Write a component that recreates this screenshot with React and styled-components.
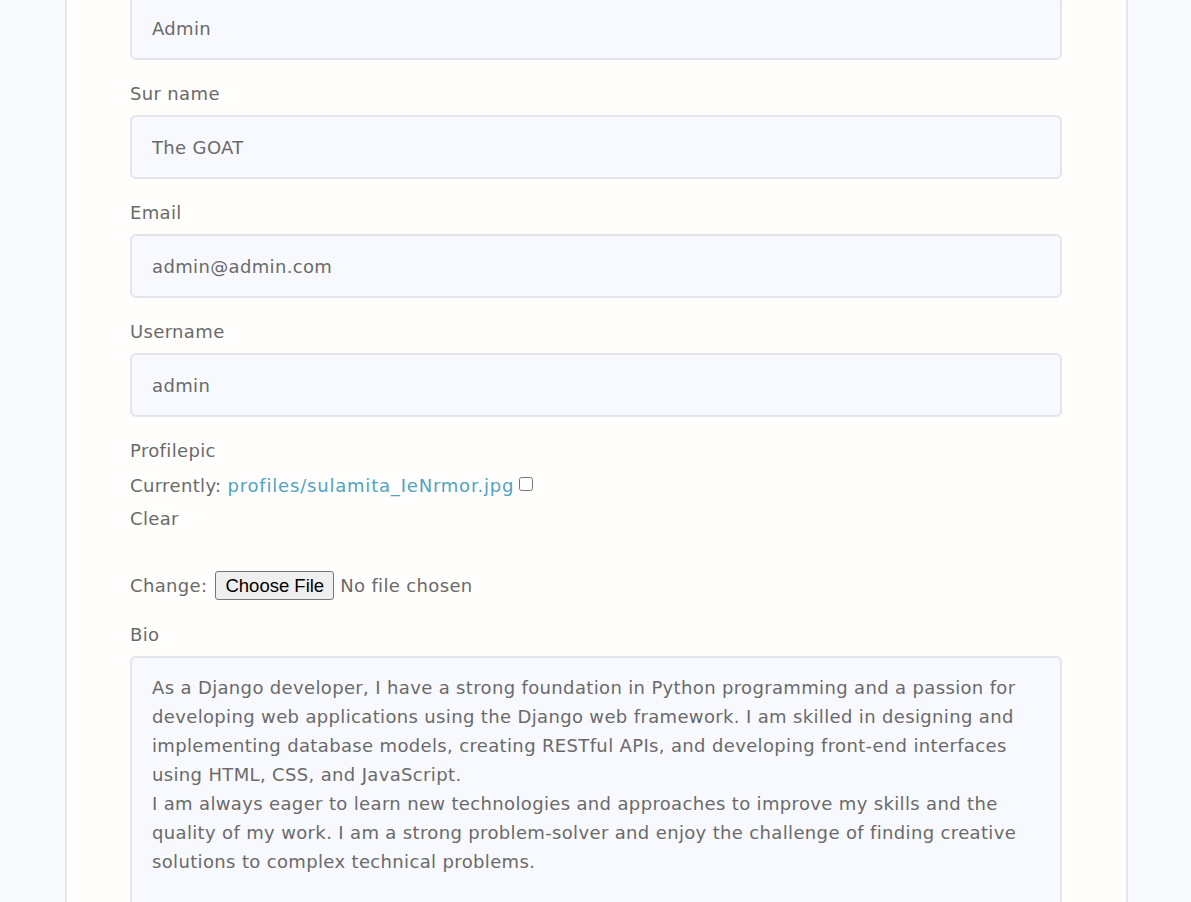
import React from "react";
import styled, { createGlobalStyle } from "styled-components";

const GlobalStyle = createGlobalStyle`
  html, body { margin: 0; padding: 0; background: #f8f9fd; overflow: hidden; }
  body { font-family: "DejaVu Sans", "Noto Sans", sans-serif; }
`;

const font = `
  font-family: "DejaVu Sans", "Noto Sans", sans-serif;
  font-size: 18px;
  letter-spacing: 0.35px;
  color: #6a6a6a;
`;

const Page = styled.div`
  min-height: 902px;
  padding-left: 65px;
  display: flex;
  align-items: stretch;
`;

const Card = styled.main`
  width: 932px;
  min-height: 902px;
  padding: 0 64px 0 63px;
  background: #fffefd;
  border-left: 2px solid #e4e6eb;
  border-right: 2px solid #e4e6eb;
`;

const Form = styled.form`
  margin-top: -39px;
  display: flex;
  flex-direction: column;
`;

const Group = styled.div`
  display: flex;
  flex-direction: column;
  margin-bottom: ${(p) => p.$mb ?? 20}px;
`;

const Label = styled.label`
  ${font}
  display: block;
  line-height: 27px;
  margin-bottom: 8px;
`;

const Input = styled.input`
  ${font}
  box-sizing: border-box;
  width: 932px;
  height: 64px;
  padding: 16px 20px;
  line-height: 27px;
  background: #f8f9fe;
  border: 2px solid #e3e5ea;
  border-radius: 6px;
  outline: none;
`;

const TextArea = styled.textarea`
  ${font}
  box-sizing: border-box;
  width: 932px;
  height: 300px;
  padding: 15px 20px;
  line-height: 29px;
  background: #f8f9fe;
  border: 2px solid #e3e5ea;
  border-radius: 6px;
  outline: none;
  resize: none;
  overflow: hidden;
`;

const Line = styled.div`
  ${font}
  line-height: 27px;
  display: flex;
  align-items: center;
  margin-bottom: ${(p) => p.$mb || 0}px;
  margin-top: ${(p) => p.$mt || 0}px;
  height: ${(p) => p.$h || 27}px;
`;

const Link = styled.a`
  color: #4fa3c3;
  text-decoration: none;
  letter-spacing: 0.8px;
  margin-left: 6px;
`;

const Check = styled.input`
  width: 14px;
  height: 14px;
  margin: 0 0 3px 5px;
`;

const FileInput = styled.input`
  ${font}
  margin-left: 8px;
  line-height: 29px;
  &::file-selector-button {
    font-family: "Liberation Sans", Arial, sans-serif;
    font-size: 18.5px;
    letter-spacing: 0;
    color: #000;
    background: #efefef;
    border: 1px solid #767676;
    border-radius: 3px;
    padding: 2px 9px;
    height: 29px;
    margin-right: 6px;
  }
`;

const bio =
  "As a Django developer, I have a strong foundation in Python programming and a passion for developing web applications using the Django web framework. I am skilled in designing and implementing database models, creating RESTful APIs, and developing front-end interfaces using HTML, CSS, and JavaScript.\nI am always eager to learn new technologies and approaches to improve my skills and the quality of my work. I am a strong problem-solver and enjoy the challenge of finding creative solutions to complex technical problems.";

function Field({ label, value, id }) {
  return (
    <Group>
      <Label htmlFor={id}>{label}</Label>
      <Input id={id} defaultValue={value} />
    </Group>
  );
}

export default function App() {
  return (
    <>
      <GlobalStyle />
      <Page>
        <Card>
          <Form onSubmit={(e) => e.preventDefault()}>
            <Field id="first" label="First name" value="Admin" />
            <Field id="sur" label="Sur name" value="The GOAT" />
            <Field id="email" label="Email" value="admin@admin.com" />
            <Field id="user" label="Username" value="admin" />
            <Group $mb={21}>
              <Label htmlFor="pic">Profilepic</Label>
              <Line $mb={6}>
                Currently:
                <Link href="#">profiles/sulamita_IeNrmor.jpg</Link>
                <Check type="checkbox" id="clear" />
              </Line>
              <Line as="label" htmlFor="clear">Clear</Line>
              <Line $mt={39} $h={29}>
                Change:
                <FileInput type="file" id="pic" />
              </Line>
            </Group>
            <Group>
              <Label htmlFor="bio">Bio</Label>
              <TextArea id="bio" defaultValue={bio} />
            </Group>
          </Form>
        </Card>
      </Page>
    </>
  );
}
